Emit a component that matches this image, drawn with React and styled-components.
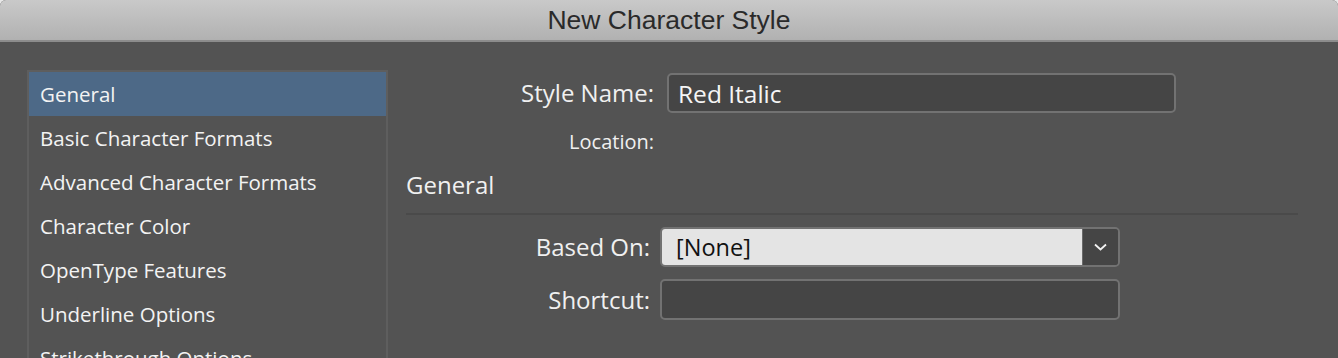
import React from 'react';
import styled, { createGlobalStyle } from 'styled-components';

const GlobalStyle = createGlobalStyle`
  html, body {
    margin: 0;
    padding: 0;
    background: #e8e8e8;
  }
  body {
    font-family: "Open Sans", "Noto Sans", sans-serif;
    -webkit-font-smoothing: antialiased;
  }
`;

const sections = [
  'General',
  'Basic Character Formats',
  'Advanced Character Formats',
  'Character Color',
  'OpenType Features',
  'Underline Options',
  'Strikethrough Options',
];

const App = () => {
  return (
    <>
      <GlobalStyle />
      <Dialog>
        <TitleBar>New Character Style</TitleBar>
        <Body>
          <SectionList>
            {sections.map((name, i) => (
              <SectionItem key={name} selected={i === 0}>{name}</SectionItem>
            ))}
          </SectionList>

          <Panel>
            <NameGrid>
              <Label>Style Name:</Label>
              <TextField>Red Italic</TextField>
              <Label small>Location:</Label>
              <div />
            </NameGrid>

            <GroupHeading>General</GroupHeading>
            <Divider />

            <FieldGrid>
              <Label>Based On:</Label>
              <Select>
                <SelectValue>[None]</SelectValue>
                <SelectButton>
                  <svg width="15" height="10" viewBox="0 0 15 10">
                    <path d="M2 2.5 L7.5 7.5 L13 2.5" fill="none" stroke="#f2f2f2" strokeWidth="1.8" />
                  </svg>
                </SelectButton>
              </Select>
              <Label>Shortcut:</Label>
              <TextField tall />
            </FieldGrid>
          </Panel>
        </Body>
      </Dialog>
    </>
  );
};

const Dialog = styled.div`
  width: 1338px;
  height: 358px;
  background: #535353;
  overflow: hidden;
  border-radius: 6px 6px 0 0;
`;

const TitleBar = styled.div`
  height: 42px;
  display: flex;
  align-items: center;
  justify-content: center;
  background: linear-gradient(#c9c9c9, #b1b1b1);
  border-bottom: 2px solid #8c8c8c;
  font-family: "Liberation Sans", Arial, sans-serif;
  font-size: 26.5px;
  color: #2a2a2a;
  box-sizing: border-box;
`;

const Body = styled.div`
  display: flex;
  align-items: flex-start;
  padding: 28px 0 0 27px;
`;

const SectionList = styled.div`
  width: 357px;
  border: 2px solid #5e5e5e;
  border-bottom: none;
  display: flex;
  flex-direction: column;
  height: 320px;
`;

const SectionItem = styled.div`
  height: 44px;
  flex-shrink: 0;
  display: flex;
  align-items: center;
  padding-left: 11px;
  font-size: 20.5px;
  color: #f3f3f3;
  background: ${p => (p.selected ? '#4d6987' : 'transparent')};
`;

const Panel = styled.div`
  width: 892px;
  margin-left: 18px;
  padding-top: 3px;
  display: flex;
  flex-direction: column;
`;

const NameGrid = styled.div`
  display: grid;
  grid-template-columns: 248px 509px;
  grid-template-rows: 40px 24px;
  column-gap: 13px;
  row-gap: 17px;
  align-items: center;
`;

const Label = styled.div`
  text-align: right;
  color: #f0f0f0;
  font-size: ${p => (p.small ? '20px' : '24px')};
  line-height: 24px;
`;

const TextField = styled.div`
  height: ${p => (p.tall ? '41px' : '40px')};
  box-sizing: border-box;
  background: #454545;
  border: 2px solid #727272;
  border-radius: 5px;
  display: flex;
  align-items: center;
  padding-left: 9px;
  font-size: 24.5px;
  color: #f5f5f5;
`;

const GroupHeading = styled.div`
  margin-top: 15px;
  height: 30px;
  display: flex;
  align-items: center;
  font-size: 24px;
  color: #f0f0f0;
`;

const Divider = styled.div`
  margin-top: 14px;
  height: 2px;
  background: #4a4a4a;
`;

const FieldGrid = styled.div`
  margin-top: 12px;
  display: grid;
  grid-template-columns: 244px 460px;
  column-gap: 10px;
  row-gap: 12px;
  align-items: center;
`;

const Select = styled.div`
  height: 40px;
  box-sizing: border-box;
  border: 2px solid #727272;
  border-radius: 5px;
  display: flex;
  overflow: hidden;
`;

const SelectValue = styled.div`
  flex: 1;
  background: #e4e4e4;
  display: flex;
  align-items: center;
  padding-left: 14px;
  font-size: 23.5px;
  color: #111;
`;

const SelectButton = styled.div`
  width: 35px;
  background: #454545;
  border-left: 1px solid #6a6a6a;
  display: flex;
  align-items: center;
  justify-content: center;
`;

export default App;
